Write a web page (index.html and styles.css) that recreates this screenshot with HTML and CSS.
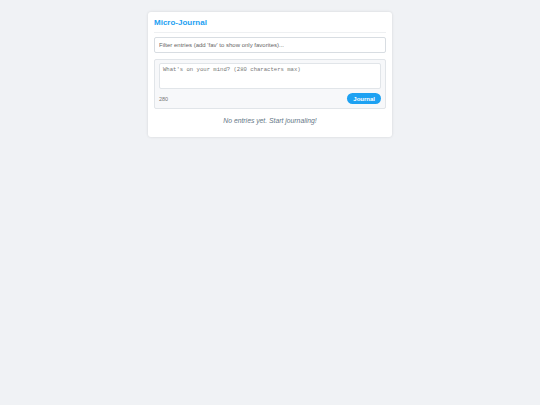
FILE: index.html
```html
<!DOCTYPE html>
<html lang="en">
<head>
    <meta charset="UTF-8">
    <meta name="viewport" content="width=device-width, initial-scale=1.0">
    <title>Micro-Journal</title>
    <link rel="stylesheet" href="styles.css">
</head>
<body>
    <div class="container">
        <h1>Micro-Journal</h1>
        <input type="text" class="filter" id="filter" placeholder="Filter entries (add 'fav' to show only favorites)...">
        <div class="compose">
            <textarea id="entry" maxlength="280" placeholder="What's on your mind? (280 characters max)"></textarea>
            <div class="compose-footer">
                <span class="counter" id="counter">280</span>
                <button class="journal-btn">Journal</button>
            </div>
        </div>
        <p class="empty">No entries yet. Start journaling!</p>
    </div>
</body>
</html>
```

FILE: styles.css
```css
body {
    font-family: "Liberation Sans", Arial, sans-serif;
    background-color: #f0f2f5;
    margin: 0;
    padding: 12px 0;
}
.container {
    width: 232px;
    margin: 0 auto;
    background-color: #fff;
    padding: 6px 6px 12px;
    border-radius: 3px;
    box-shadow: 0 0 3px rgba(0, 0, 0, 0.12);
}
h1 {
    color: #1da1f2;
    font-size: 8px;
    line-height: 9px;
    margin: 0 0 4px;
    padding: 0 0 5px;
    border-bottom: 1px solid #eef0f2;
}
.filter {
    display: block;
    width: 100%;
    box-sizing: border-box;
    height: 16px;
    padding: 0 4px;
    border: 1px solid #d8dde2;
    border-radius: 2px;
    font-family: inherit;
    font-size: 6px;
    margin: 0 0 6px;
}
.filter::placeholder {
    color: #666;
}
.compose {
    background-color: #f7f8fa;
    border: 1px solid #e1e5e9;
    border-radius: 2px;
    padding: 3px 4px 4px;
}
textarea {
    display: block;
    width: 100%;
    box-sizing: border-box;
    height: 26px;
    resize: none;
    border: 1px solid #e1e5e9;
    border-radius: 2px;
    padding: 2px 3px;
    font-family: "Liberation Mono", monospace;
    font-size: 5.6px;
}
textarea::placeholder {
    color: #777;
}
.compose-footer {
    display: flex;
    justify-content: space-between;
    align-items: center;
    margin-top: 4px;
}
.counter {
    font-size: 5.5px;
    color: #777;
}
.journal-btn {
    background-color: #1da1f2;
    color: #fff;
    border: none;
    border-radius: 6px;
    padding: 0 6px;
    height: 11px;
    font-family: inherit;
    font-size: 6px;
    font-weight: bold;
    cursor: pointer;
}
.empty {
    text-align: center;
    font-style: italic;
    color: #657786;
    font-size: 6.8px;
    line-height: 8px;
    margin: 8px 0 0;
}
```
